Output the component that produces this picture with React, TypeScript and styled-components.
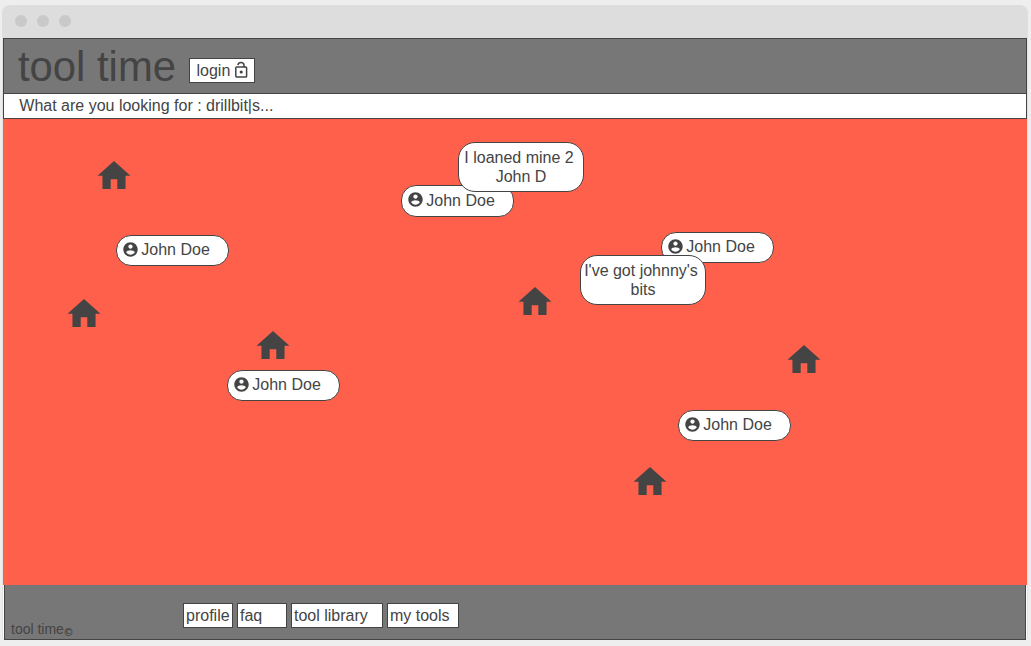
import React from "react";
import styled, { createGlobalStyle } from "styled-components";

const ink = "#444";

const GlobalStyle = createGlobalStyle`
  * { box-sizing: border-box; }
  body {
    margin: 0;
    background: #eee;
    color: ${ink};
    font: 16px/19px "Liberation Sans", Arial, sans-serif;
    overflow: hidden;
  }
`;

const Page = styled.div`
  height: 646px;
  padding: 5px 3px 0 2px;
`;

const BrowserWindow = styled.div`
  height: 634px;
  border: solid #e2e2e2;
  border-width: 0 1px;
  border-radius: 8px 8px 3px 3px;
  background: #fff;
`;

const TitleBar = styled.div`
  display: flex;
  gap: 10px;
  height: 33px;
  margin: 0 -1px;
  padding: 10px 0 0 13px;
  border-radius: 8px 8px 0 0;
  background: #ddd;
`;

const Dot = styled.span`
  width: 12px;
  height: 12px;
  border-radius: 50%;
  background: #c9c9c9;
`;

const Header = styled.header`
  display: flex;
  align-items: flex-start;
  height: 55px;
  padding-left: 14px;
  border: 1px solid ${ink};
  border-bottom: 0;
  background: #777;
`;

const Brand = styled.h1`
  width: 171px;
  margin: 3px 0 0;
  font-size: 41.8px;
  font-weight: 400;
  line-height: 49px;
  white-space: nowrap;
`;

const LoginButton = styled.button`
  display: flex;
  gap: 4px;
  width: 66px;
  height: 25px;
  margin-top: 19px;
  padding: 2px 0 0 6.5px;
  border: 1px solid ${ink};
  background: #fff;
  color: inherit;
  font: inherit;

  svg { flex: none; }
`;

const SearchBar = styled.div`
  height: 26px;
  padding: 2px 15.3px;
  border: 1px solid ${ink};
  background: #fff;
`;

const MapArea = styled.main`
  position: relative;
  height: 466px;
  background: #ff604c;
`;

const Pin = styled.div<{ $x: number; $y: number }>`
  position: absolute;
  left: ${(p) => p.$x}px;
  top: ${(p) => p.$y}px;
`;

const HomeGlyph = styled.svg`
  display: block;
  width: 34px;
  height: 29px;
  fill: ${ink};
`;

const Pill = styled.div<{ $tall: boolean }>`
  display: flex;
  gap: 3.3px;
  width: 113px;
  height: ${(p) => (p.$tall ? 32 : 31)}px;
  padding: ${(p) => (p.$tall ? 5 : 4)}px 0 0 6px;
  border: 1px solid ${ink};
  border-radius: 15px;
  background: #fff;
  white-space: nowrap;

  svg { flex: none; margin-top: ${(p) => (p.$tall ? 1 : 2)}px; }
`;

const Bubble = styled.div<{ $shift: number }>`
  width: 126px;
  height: 50px;
  padding-top: 5px;
  border: 1px solid ${ink};
  border-radius: 17px;
  background: #fff;
  text-align: center;
  white-space: nowrap;

  span { display: block; }
  span:first-child { margin-left: ${(p) => p.$shift}px; }
`;

const Footer = styled.footer`
  display: flex;
  height: 55px;
  margin: 0 1px;
  border: solid ${ink};
  border-width: 0 1px 1px;
  background: #777;
`;

const Copyright = styled.div`
  width: 178px;
  padding: 36px 0 0 6px;
  font-size: 14px;
  line-height: 17px;

  small {
    position: relative;
    top: 2px;
    left: -0.5px;
    font: 10px/1 "DejaVu Sans", sans-serif;
    -webkit-text-stroke: 0.25px ${ink};
  }
`;

const Nav = styled.nav`
  display: flex;
  gap: 4px;
  padding-top: 18px;
`;

const NavLink = styled.a<{ $width: number }>`
  width: ${(p) => p.$width}px;
  height: 25px;
  padding: 2px;
  border: 1px solid ${ink};
  background: #fff;
  white-space: nowrap;
`;

const AccountIcon = () => (
  <svg width="15" height="15" viewBox="1.6 1.6 20.8 20.8" fill={ink}>
    <path d="M12 2C6.48 2 2 6.48 2 12s4.48 10 10 10 10-4.48 10-10S17.52 2 12 2zm0 3c1.66 0 3 1.34 3 3s-1.34 3-3 3-3-1.34-3-3 1.34-3 3-3zm0 14.2c-2.5 0-4.71-1.28-6-3.22.03-1.99 4-3.08 6-3.08 1.99 0 5.97 1.09 6 3.08-1.29 1.94-3.5 3.22-6 3.22z" />
  </svg>
);

const LockIcon = () => (
  <svg width="14" height="17" viewBox="-0.8 0 14 17" fill="none" stroke={ink} strokeWidth="1.5">
    <rect x="1" y="6" width="10.8" height="10" rx="0.8" />
    <path d="M3.1 4.1C3.4 2.2 4.6 1.4 6.2 1.4c1.8 0 3 1.2 3 2.9v2" />
    <circle cx="6.4" cy="11" r="1.6" fill={ink} stroke="none" />
  </svg>
);

const homes = [
  [94, 42],
  [64, 180],
  [253, 212],
  [515, 168],
  [784, 226],
  [630, 348],
];

const people = [
  { x: 113, y: 116, tall: false },
  { x: 398, y: 66, tall: true },
  { x: 224, y: 251, tall: false },
  { x: 658, y: 113, tall: false },
  { x: 675, y: 291, tall: false },
];

const messages = [
  { x: 455, y: 23, shift: -4, lines: ["I loaned mine 2", "John D"] },
  { x: 577, y: 136, shift: -4, lines: ["I've got johnny's", "bits"] },
];

const links = [
  { label: "profile", width: 50 },
  { label: "faq", width: 50 },
  { label: "tool library", width: 92 },
  { label: "my tools", width: 72 },
];

export default function App() {
  return (
    <>
      <GlobalStyle />
      <Page>
        <BrowserWindow>
          <TitleBar>
            <Dot />
            <Dot />
            <Dot />
          </TitleBar>
          <Header>
            <Brand>tool time</Brand>
            <LoginButton>
              login
              <LockIcon />
            </LoginButton>
          </Header>
          <SearchBar>What are you looking for : drillbit|s...</SearchBar>
          <MapArea>
            {homes.map(([x, y]) => (
              <Pin key={`${x}-${y}`} $x={x} $y={y}>
                <HomeGlyph viewBox="1.7 3 20.6 17.576">
                  <path d="M10 20v-6h4v6h5v-8h3L12 3 2 12h3v8z" />
                </HomeGlyph>
              </Pin>
            ))}
            {people.map((p) => (
              <Pin key={`${p.x}-${p.y}`} $x={p.x} $y={p.y}>
                <Pill $tall={p.tall}>
                  <AccountIcon />
                  John Doe
                </Pill>
              </Pin>
            ))}
            {messages.map((m) => (
              <Pin key={m.x} $x={m.x} $y={m.y}>
                <Bubble $shift={m.shift}>
                  {m.lines.map((line) => (
                    <span key={line}>{line}</span>
                  ))}
                </Bubble>
              </Pin>
            ))}
          </MapArea>
          <Footer>
            <Copyright>
              tool time<small>©</small>
            </Copyright>
            <Nav>
              {links.map((l) => (
                <NavLink key={l.label} $width={l.width}>
                  {l.label}
                </NavLink>
              ))}
            </Nav>
          </Footer>
        </BrowserWindow>
      </Page>
    </>
  );
}
